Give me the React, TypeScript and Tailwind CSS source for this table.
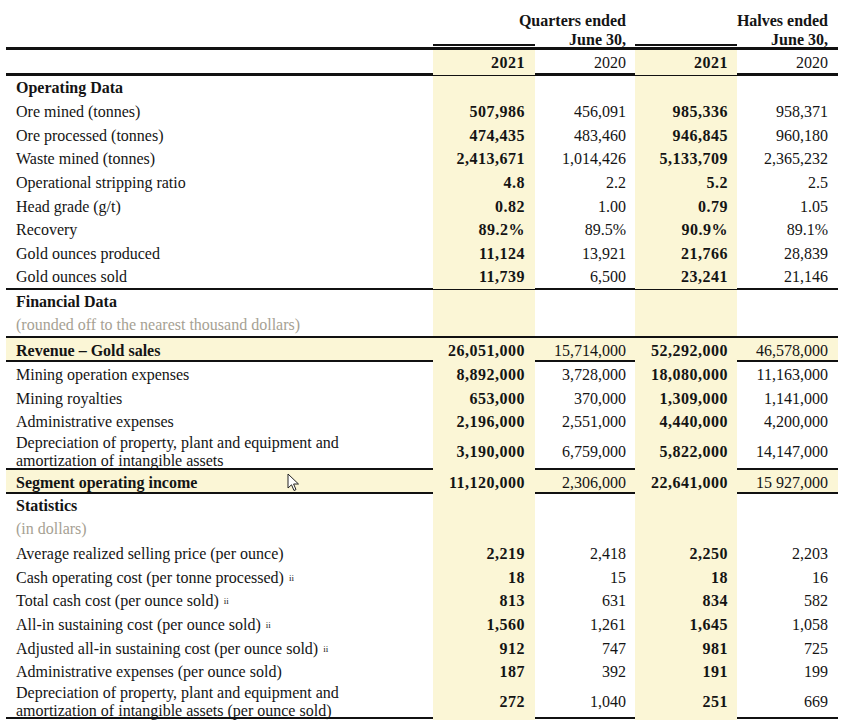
import React from "react";

const Y = "bg-[#fbf6d6]";
const COLS = "grid grid-cols-[427px_102px_100px_102px_101px]";

type RowProps = {
  label: React.ReactNode;
  vals?: string[];
  h: string;
  boldLabel?: boolean;
  band?: boolean;
  gray?: boolean;
};

function Row({ label, vals, h, boldLabel, band, gray }: RowProps) {
  const v = vals ?? ["", "", "", ""];
  return (
    <div className={`${COLS} ${h} ${band ? Y : ""}`}>
      <div
        className={`flex items-center pl-[10px] pt-[1px] leading-[18px] ${boldLabel ? "font-bold" : ""} ${
          gray ? "text-[#a6a193]" : ""
        }`}
      >
        {label}
      </div>
      <div className={`flex items-center justify-end pr-[10px] pt-[1px] font-bold tracking-[0.5px] ${Y}`}>{v[0]}</div>
      <div className="flex items-center justify-end pr-[9px] pt-[1px]">{v[1]}</div>
      <div className={`flex items-center justify-end pr-[9px] pt-[1px] font-bold tracking-[0.5px] ${Y}`}>{v[2]}</div>
      <div className="flex items-center justify-end pr-[10px] pt-[1px]">{v[3]}</div>
    </div>
  );
}

function Line({ h = "h-[2px]" }: { h?: string }) {
  return <div className={`${h} bg-[#111]`} />;
}

function Sup() {
  return <sup className="ml-[5px] text-[9px] relative top-[-2px]">ii</sup>;
}

const R = "h-[23.625px]";
const R2 = "h-[23.67px]";

export default function App() {
  return (
    <div className="w-[842px] h-[728px] bg-white text-[#141414] font-['Liberation_Serif',serif] text-[16px] relative overflow-hidden">
      <div className="ml-[6px] w-[832px]">
        {/* header */}
        <div className={`${COLS} h-[44px]`}>
          <div />
          <div className="col-span-2 pr-[9px] pt-[11px] text-right font-bold leading-[19px]">
            Quarters ended
            <br />
            June 30,
          </div>
          <div className="col-span-2 pr-[10px] pt-[11px] text-right font-bold leading-[19px]">
            Halves ended
            <br />
            June 30,
          </div>
        </div>
        <div className={`${COLS} h-[2px]`}>
          <div />
          <div className="bg-[#111]" />
          <div />
          <div className="bg-[#111]" />
          <div />
        </div>
        <div className="h-[1px]" />
        <Line h="h-[3px]" />
        <Row label="" vals={["2021", "2020", "2021", "2020"]} h="h-[23px]" />
        <Line h="h-[3px]" />
        <Row label="Operating Data" boldLabel h="h-[23px]" />
        <Row label="Ore mined (tonnes)" vals={["507,986", "456,091", "985,336", "958,371"]} h={R} />
        <Row label="Ore processed (tonnes)" vals={["474,435", "483,460", "946,845", "960,180"]} h={R} />
        <Row label="Waste mined (tonnes)" vals={["2,413,671", "1,014,426", "5,133,709", "2,365,232"]} h={R} />
        <Row label="Operational stripping ratio" vals={["4.8", "2.2", "5.2", "2.5"]} h={R} />
        <Row label="Head grade (g/t)" vals={["0.82", "1.00", "0.79", "1.05"]} h={R} />
        <Row label="Recovery" vals={["89.2%", "89.5%", "90.9%", "89.1%"]} h={R} />
        <Row label="Gold ounces produced" vals={["11,124", "13,921", "21,766", "28,839"]} h={R} />
        <Row label="Gold ounces sold" vals={["11,739", "6,500", "23,241", "21,146"]} h={R} />
        <Line />
        <Row label="Financial Data" boldLabel h="h-[22px]" />
        <Row label="(rounded off to the nearest thousand dollars)" gray h="h-[24px]" />
        <Line />
        <Row
          label="Revenue – Gold sales"
          boldLabel
          band
          vals={["26,051,000", "15,714,000", "52,292,000", "46,578,000"]}
          h="h-[22px]"
        />
        <Line />
        <Row label="Mining operation expenses" vals={["8,892,000", "3,728,000", "18,080,000", "11,163,000"]} h={R2} />
        <Row label="Mining royalties" vals={["653,000", "370,000", "1,309,000", "1,141,000"]} h={R2} />
        <Row label="Administrative expenses" vals={["2,196,000", "2,551,000", "4,440,000", "4,200,000"]} h={R2} />
        <Row
          label={
            <span>
              Depreciation of property, plant and equipment and
              <br />
              amortization of intangible assets
            </span>
          }
          vals={["3,190,000", "6,759,000", "5,822,000", "14,147,000"]}
          h="h-[35px]"
        />
        <Line />
        <Row
          label="Segment operating income"
          boldLabel
          band
          vals={["11,120,000", "2,306,000", "22,641,000", "15 927,000"]}
          h="h-[22px]"
        />
        <Line />
        <Row label="Statistics" boldLabel h="h-[23px]" />
        <Row label="(in dollars)" gray h="h-[24px]" />
        <Row label="Average realized selling price (per ounce)" vals={["2,219", "2,418", "2,250", "2,203"]} h={R2} />
        <Row
          label={
            <span>
              Cash operating cost (per tonne processed)
              <Sup />
            </span>
          }
          vals={["18", "15", "18", "16"]}
          h={R2}
        />
        <Row
          label={
            <span>
              Total cash cost (per ounce sold)
              <Sup />
            </span>
          }
          vals={["813", "631", "834", "582"]}
          h={R2}
        />
        <Row
          label={
            <span>
              All-in sustaining cost (per ounce sold)
              <Sup />
            </span>
          }
          vals={["1,560", "1,261", "1,645", "1,058"]}
          h={R2}
        />
        <Row
          label={
            <span>
              Adjusted all-in sustaining cost (per ounce sold)
              <Sup />
            </span>
          }
          vals={["912", "747", "981", "725"]}
          h={R2}
        />
        <Row label="Administrative expenses (per ounce sold)" vals={["187", "392", "191", "199"]} h={R2} />
        <Row
          label={
            <span>
              Depreciation of property, plant and equipment and
              <br />
              amortization of intangible assets (per ounce sold)
            </span>
          }
          vals={["272", "1,040", "251", "669"]}
          h="h-[34px]"
        />
        <Line />
      </div>

      {/* mouse cursor */}
      <svg
        className="absolute left-[287px] top-[473px]"
        width="13"
        height="19"
        viewBox="0 0 13 19"
      >
        <path
          d="M1 1 L1 15 L4.5 11.8 L7 17.5 L9 16.6 L6.6 11 L11.5 11 Z"
          fill="#fff"
          stroke="#222"
          strokeWidth="1"
          strokeLinejoin="round"
        />
      </svg>
    </div>
  );
}
